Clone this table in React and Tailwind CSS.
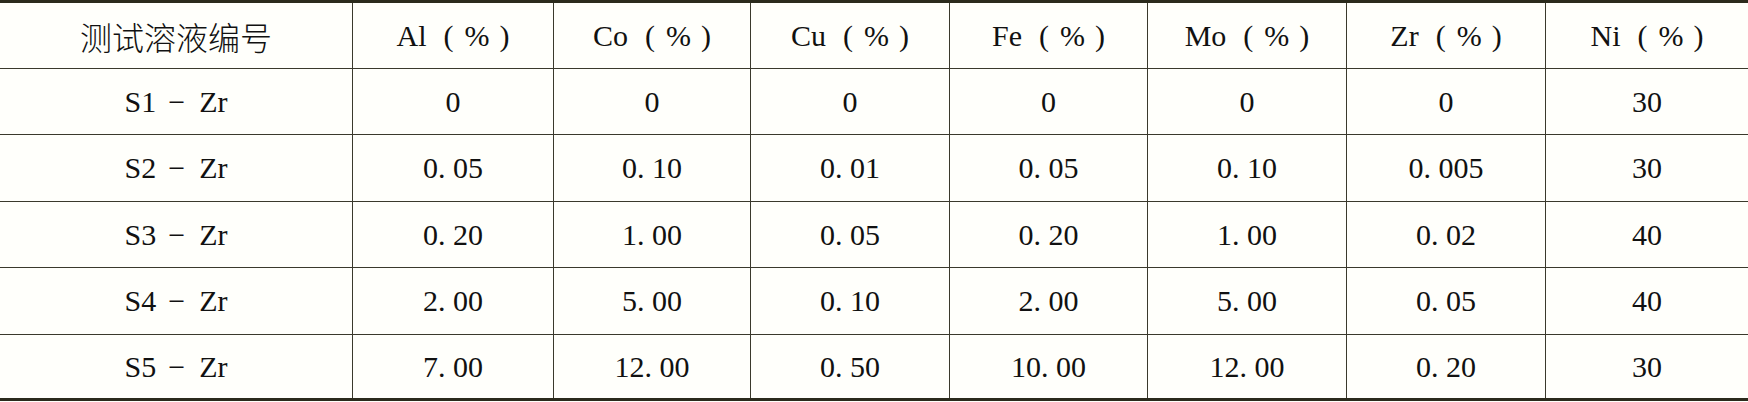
import React from 'react';

const elements = ['Al', 'Co', 'Cu', 'Fe', 'Mo', 'Zr', 'Ni'];

const rows = [
  ['S1', '0', '0', '0', '0', '0', '0', '30'],
  ['S2', '0. 05', '0. 10', '0. 01', '0. 05', '0. 10', '0. 005', '30'],
  ['S3', '0. 20', '1. 00', '0. 05', '0. 20', '1. 00', '0. 02', '40'],
  ['S4', '2. 00', '5. 00', '0. 10', '2. 00', '5. 00', '0. 05', '40'],
  ['S5', '7. 00', '12. 00', '0. 50', '10. 00', '12. 00', '0. 20', '30'],
];

const heights = ['h-[66px]', 'h-[66px]', 'h-[67px]', 'h-[66px]', 'h-[67px]', 'h-[63px]'];

const cols = 'grid grid-cols-[353px_201px_197px_199px_198px_199px_199px_1fr]';

const Cell = ({ children, last }) => (
  <div className={`flex items-center justify-center whitespace-pre ${last ? '' : 'border-r border-[#3a392c]'}`}>
    {children}
  </div>
);

const Pct = ({ name }) => (
  <>
    <span>{name}</span>
    <span className="ml-[17px]">(</span>
    <span className="ml-[11px]">%</span>
    <span className="ml-[10px]">)</span>
  </>
);

const App = () => {
  return (
    <div className="w-[1748px] h-[402px] bg-[#fffffb] text-[#111] text-[30px] font-['Liberation_Serif','Noto_Sans_CJK_SC',serif] leading-none">
      <div className="border-t-[3px] border-b-[3px] border-[#2b2a1c]">
        <div className={`${cols} ${heights[0]} border-b border-[#3a392c]`}>
          <Cell>
            <span className="text-[32px] font-['Noto_Sans_CJK_SC',sans-serif] font-light">测试溶液编号</span>
          </Cell>
          {elements.map((el, i) => (
            <Cell key={el} last={i === elements.length - 1}>
              <Pct name={el} />
            </Cell>
          ))}
        </div>
        {rows.map((r, ri) => (
          <div
            key={ri}
            className={`${cols} ${heights[ri + 1]} ${ri === rows.length - 1 ? '' : 'border-b border-[#3a392c]'}`}
          >
            <Cell>
              <span>{r[0]}</span>
              <span className="ml-[12px]">−</span>
              <span className="ml-[14px]">Zr</span>
            </Cell>
            {r.slice(1).map((v, i) => (
              <Cell key={i} last={i === r.length - 2}>
                {v}
              </Cell>
            ))}
          </div>
        ))}
      </div>
    </div>
  );
};

export default App;
